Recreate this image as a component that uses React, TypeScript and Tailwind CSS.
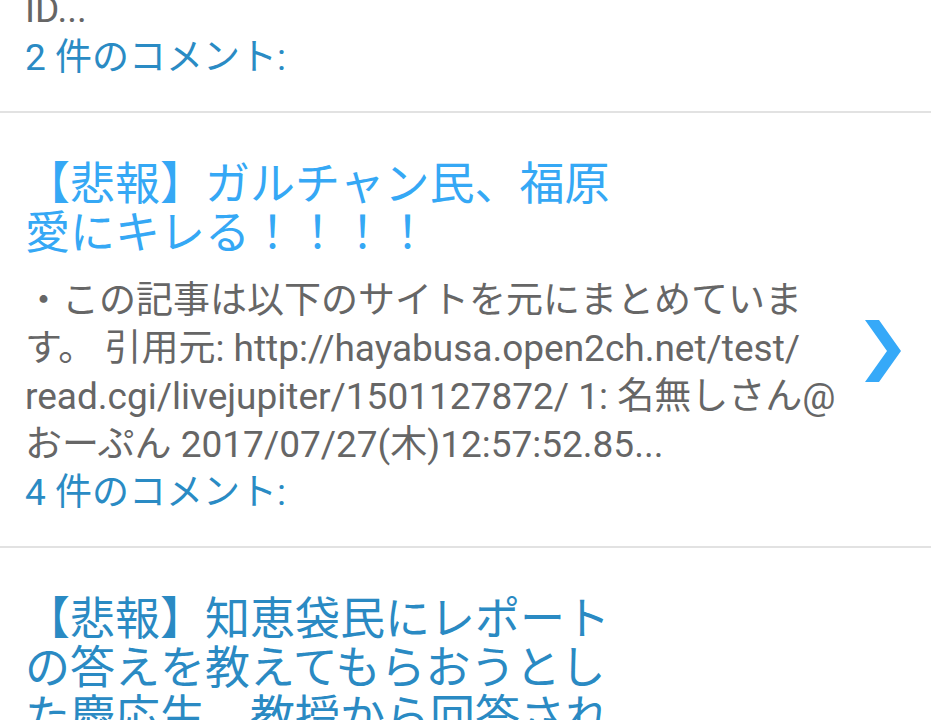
import React from 'react';

const Chevron = () => {
    return (
        <svg width="36" height="62" viewBox="0 0 36 62" className="text-[#36a9f8]">
            <polygon points="0,0 14,0 36,31 14,62 0,62 22,31" fill="currentColor" />
        </svg>
    );
};

const CommentLink = ({ count }: { count: number }) => {
    return (
        <p className="text-[37px] leading-[48px] text-[#2a8bc4]">
            {count} 件のコメント:
        </p>
    );
};

const ArticleRow = ({
    title,
    titleColor,
    children,
    comments,
}: {
    title: string;
    titleColor: string;
    children?: React.ReactNode;
    comments?: number;
}) => {
    return (
        <div className="flex border-b-2 border-[#e2e2e2]">
            <div className="w-[845px] shrink-0 pl-[25px] pt-[47px] pb-[29px]">
                <h2 className={`w-[600px] text-[45px] leading-[49px] font-normal ${titleColor}`}>{title}</h2>
                {children && (
                    <p className="mt-[19px] text-[37px] leading-[48px] text-[#666666]">{children}</p>
                )}
                {comments !== undefined && <CommentLink count={comments} />}
            </div>
            <div className="flex flex-1 items-center pl-[20px] pt-[42px]">
                {children && <Chevron />}
            </div>
        </div>
    );
};

export default function App() {
    return (
        <div
            className="h-[720px] w-[931px] overflow-hidden bg-white"
            style={{ fontFamily: 'Roboto, "Noto Sans CJK JP", sans-serif' }}
        >
            {/* previous article, scrolled mostly out of view */}
            <div className="-mt-[14px] border-b-2 border-[#e2e2e2] pl-[25px] pb-[29px]">
                <p className="text-[37px] leading-[48px] text-[#666666]">ID...</p>
                <CommentLink count={2} />
            </div>

            <ArticleRow title="【悲報】ガルチャン民、福原愛にキレる！！！！" titleColor="text-[#35a8f5]" comments={4}>
                ・この記事は以下のサイトを元にまとめています。 引用元: http://hayabusa.open2ch.net/test/<wbr />
                read.cgi/livejupiter/1501127872/ 1: 名無しさん@おーぷん 2017/07/27(木)12:57:52.85...
            </ArticleRow>

            <ArticleRow
                title="【悲報】知恵袋民にレポートの答えを教えてもらおうとした慶応生、教授から回答される"
                titleColor="text-[#2a8ac3]"
            />
        </div>
    );
}
